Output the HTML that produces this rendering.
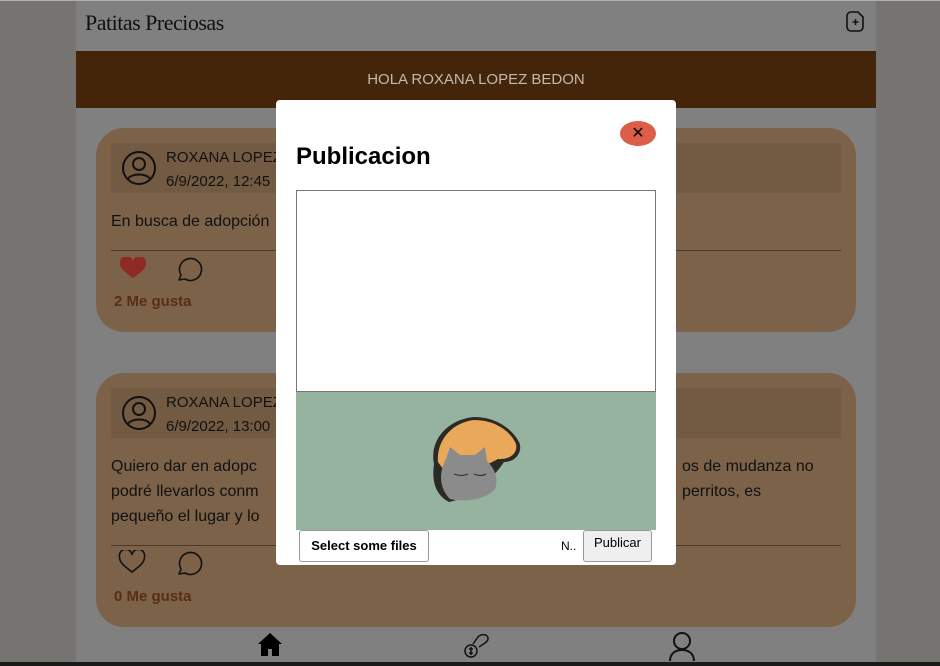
<!DOCTYPE html>
<html><head><meta charset="utf-8"><style>
*{box-sizing:border-box;margin:0;padding:0}
body{width:940px;height:666px;overflow:hidden;background:#767471;font-family:"Liberation Sans",sans-serif;position:relative}
.col{position:absolute;left:76px;top:1px;width:800px;height:661px;background:#808080}
.topline{position:absolute;left:0;top:0;width:940px;height:1px;background:#b9a9b0}
.bottom{position:absolute;left:0;top:662px;width:940px;height:4px;background:#1a1a1a}
.logo{position:absolute;left:85px;top:10px;font-family:"Liberation Serif",serif;font-size:22px;color:#111;letter-spacing:-0.5px}
.band{position:absolute;left:76px;top:51px;width:800px;height:57px;background:#45250a;color:#c2b8ae;font-size:15px;text-align:center;line-height:57px}
.card{position:absolute;left:96px;width:760px;background:#7b6249;border-radius:28px}
.hd{position:absolute;left:15px;top:15px;width:730px;height:50px;background:#735a42}
.nm{position:absolute;left:55px;top:3px;font-size:15px;color:#111;line-height:24px}
.txt{position:absolute;left:15px;font-size:16px;color:#111;line-height:25px}
.hr{position:absolute;left:15px;width:730px;height:1px;background:#4a3a2a}
.likes{position:absolute;left:18px;font-weight:bold;font-size:15px;color:#5a2e14}
.modal{position:absolute;left:276px;top:100px;width:400px;height:465px;background:#fff;border-radius:4px}
.modal h2{position:absolute;left:20px;top:43px;font-size:24px;font-weight:bold;color:#000}
.close{position:absolute;left:344px;top:21px;width:36px;height:25px;border-radius:50%;background:#dc5e48;text-align:center;line-height:25px;font-size:16px}
.ta{position:absolute;left:20px;top:90px;width:360px;height:202px;border:1px solid #777}
.img{position:absolute;left:20px;top:292px;width:360px;height:138px;background:#95b39f}
.sel{position:absolute;left:23px;top:430px;width:130px;height:32px;border:1px solid #999;border-radius:3px;font-weight:bold;font-size:13px;text-align:center;line-height:30px}
.n{position:absolute;left:285px;top:439px;font-size:12px}
.pub{position:absolute;left:307px;top:430px;width:69px;height:32px;border:1px solid #999;border-radius:3px;background:#efefef;font-size:13px;text-align:center;line-height:24px}
</style></head><body>
<div class="topline"></div>
<div class="col"></div>
<div class="logo">Patitas Preciosas</div>
<svg style="position:absolute;left:846px;top:11px" width="19" height="21" viewBox="0 0 19 21"><path d="M4 1h8l5 5v10a4 4 0 0 1-4 4H5a4 4 0 0 1-4-4V5a4 4 0 0 1 4-4z" fill="none" stroke="#111" stroke-width="1.6"/><path d="M9.5 8v6M6.5 11h6" stroke="#111" stroke-width="1.5"/></svg>
<div class="band">HOLA ROXANA LOPEZ BEDON</div>

<div class="card" style="top:128px;height:204px">
 <div class="hd"><svg style="position:absolute;left:10px;top:7px" width="36" height="36" viewBox="0 0 36 36" fill="none" stroke="#111" stroke-width="2"><circle cx="18" cy="18" r="16"/><circle cx="18" cy="14" r="6"/><path d="M7 29c3-6 19-6 22 0"/></svg><div class="nm">ROXANA LOPEZ<br>6/9/2022, 12:45</div></div>
 <div class="txt" style="top:81px">En busca de adopción</div>
 <div class="hr" style="top:122px"></div>
 <svg style="position:absolute;left:23px;top:129px" width="28" height="22" viewBox="0 0 28 22"><path d="M14 21C4 14 1 11 1 6.5a6 6 0 0 1 13-2 6 6 0 0 1 13 2c0 4.5-3 7.5-13 14.5z" fill="#8e2a24"/></svg>
 <svg style="position:absolute;left:77px;top:126px" width="30" height="30" viewBox="0 0 30 30" fill="none" stroke="#111" stroke-width="1.6"><path d="M6 26l2-5A11 11 0 1 1 12 25z" stroke-linejoin="round"/></svg>
 <div class="likes" style="top:165px">2 Me gusta</div>
</div>

<div class="card" style="top:373px;height:254px">
 <div class="hd"><svg style="position:absolute;left:10px;top:7px" width="36" height="36" viewBox="0 0 36 36" fill="none" stroke="#111" stroke-width="2"><circle cx="18" cy="18" r="16"/><circle cx="18" cy="14" r="6"/><path d="M7 29c3-6 19-6 22 0"/></svg><div class="nm">ROXANA LOPEZ<br>6/9/2022, 13:00</div></div>
 <div class="txt" style="top:81px">Quiero dar en adopc<br>podré llevarlos conm<br>pequeño el lugar y lo</div>
 <div class="txt" style="top:81px;left:586px">os de mudanza no<br>perritos, es</div>
 <div class="hr" style="top:172px"></div>
 <svg style="position:absolute;left:22px;top:177px" width="28" height="24" viewBox="0 0 28 24"><path d="M14 22C4 14.5 1.5 11.5 1.5 7a6 6 0 0 1 12.5-2.5A6 6 0 0 1 26.5 7c0 4.5-2.5 7.5-12.5 15z" fill="none" stroke="#111" stroke-width="1.6" stroke-linejoin="round"/></svg>
 <svg style="position:absolute;left:77px;top:175px" width="30" height="30" viewBox="0 0 30 30" fill="none" stroke="#111" stroke-width="1.6"><path d="M6 26l2-5A11 11 0 1 1 12 25z" stroke-linejoin="round"/></svg>
 <div class="likes" style="top:215px">0 Me gusta</div>
</div>

<svg style="position:absolute;left:257px;top:632px" width="26" height="25" viewBox="0 0 26 25"><path d="M13 1L1 12h3v12h7v-7h4v7h7V12h3z" fill="#000"/></svg>
<svg style="position:absolute;left:462px;top:631px" width="28" height="28" viewBox="0 0 28 28" fill="none" stroke="#111" stroke-width="1.5"><circle cx="9" cy="20" r="6"/><path d="M9 16v8M7 18h4M7 22h4"/><path d="M11 13l5-7c3-3 7-3 9-1s1 5-2 7l-6 4"/></svg>
<svg style="position:absolute;left:668px;top:631px" width="28" height="30" viewBox="0 0 28 30" fill="none" stroke="#111" stroke-width="2"><circle cx="14" cy="10" r="8"/><path d="M2 30c0-8 6-11 12-11s12 3 12 11"/></svg>
<div class="bottom"></div>

<div class="modal">
 <div class="close">✕</div>
 <h2>Publicacion</h2>
 <div class="ta"></div>
 <div class="img"><svg style="position:absolute;left:128px;top:22px" width="100" height="95" viewBox="0 0 100 95"><path d="M10 50C5 25 25 5 50 3c25 0 40 15 45 25 4 8-2 20-15 20-10 15-30 35-55 40C10 80 8 65 10 50z" fill="#2c2a25"/><path d="M14 48C12 25 30 8 50 6c22 0 37 12 42 24 2 8-5 16-18 15-15 8-40 20-55 10z" fill="#eaa85a"/><path d="M22 45l4-12 10 8h15l10-8 2 14c8 8 12 18 8 28-8 10-30 14-45 10-10-10-12-25-4-40z" fill="#8b8b8b"/><path d="M30 60c5 2 10 2 14 0M50 60c4 2 9 2 12 0" stroke="#333" stroke-width="1.2" fill="none"/></svg></div>
 <div class="sel">Select some files</div>
 <div class="n">N..</div>
 <div class="pub">Publicar</div>
</div>
</body></html>
